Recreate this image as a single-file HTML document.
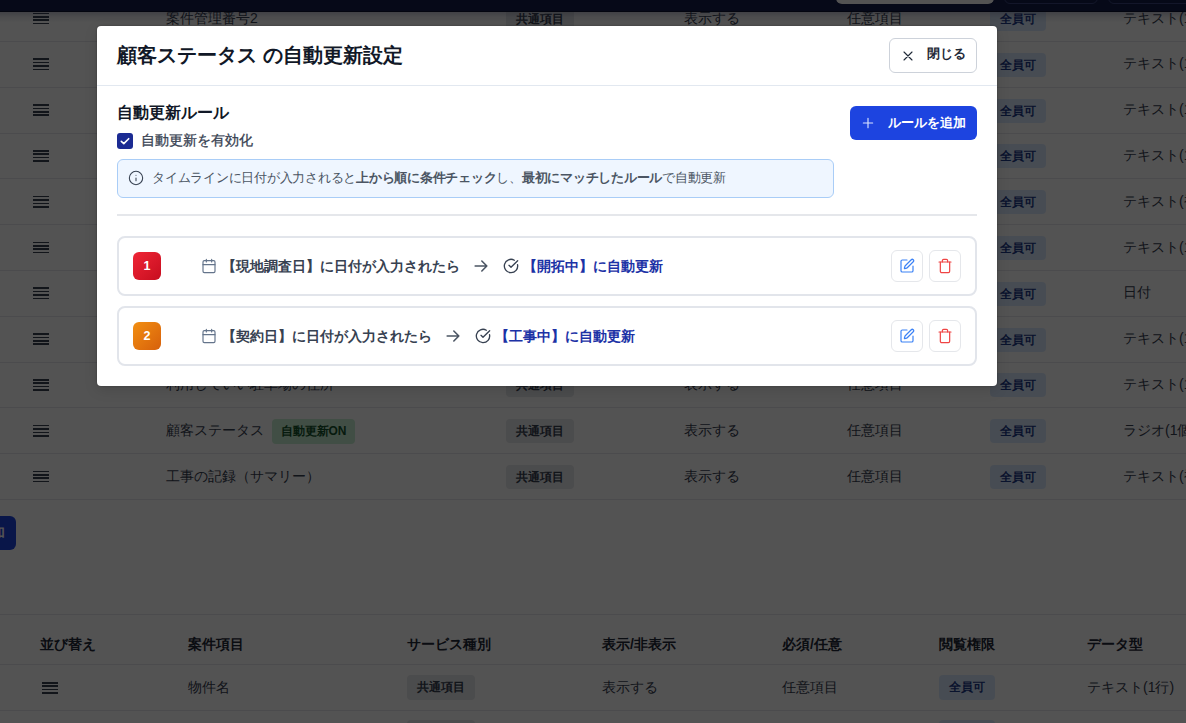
<!DOCTYPE html>
<html lang="ja"><head><meta charset="utf-8">
<style>
*{box-sizing:border-box;margin:0;padding:0}
html,body{width:1186px;height:723px;overflow:hidden;background:#fff;font-family:"Liberation Sans",sans-serif;color:#111827}
.abs{position:absolute}
#page{position:absolute;left:0;top:0;width:1186px;height:723px;background:#fff;overflow:hidden}
.nav{position:absolute;left:0;top:0;width:1186px;height:12px;background:#131c4a;z-index:3;border-bottom:1px solid #0a1030;overflow:hidden}
.navsh{position:absolute;left:0;top:12px;width:1186px;height:11px;z-index:3;background:linear-gradient(rgba(40,45,90,.26),rgba(40,45,90,.09) 50%,rgba(40,45,90,0))}
.row{position:absolute;left:0;width:1186px;border-bottom:1px solid #e5e7eb}
.ham{position:absolute;width:16px;height:12px}
.ham i{position:absolute;left:0;width:16px;height:1.7px;background:#374151}
.cell{position:absolute;font-size:14px;line-height:20px;color:#374151;white-space:nowrap}
.th{font-weight:700;color:#1f2937}
.chip{position:absolute;height:25px;border-radius:4px;font-size:12px;font-weight:700;line-height:25px;text-align:center;white-space:nowrap}
.chip.g{background:#e6e8eb;color:#374151}
.chip.b{background:#dbeafe;color:#1e3a8a}
.chip.gr{background:#c9f0d3;color:#14532d}
#ov{position:absolute;left:0;top:0;width:1186px;height:723px;background:rgba(0,0,0,.675);z-index:10}
#modal{position:absolute;left:97px;top:26px;width:900px;height:360px;background:#fff;border-radius:4px;box-shadow:0 0 2px rgba(0,0,0,.3),0 4px 14px rgba(0,0,0,.12)}
#m{position:absolute;left:0;top:0;width:1186px;height:723px;z-index:11}
#m .abs{z-index:12}
.mt{font-size:20px;font-weight:700;line-height:30px;color:#111827;white-space:nowrap}
.closebtn{width:88px;height:35px;border:1px solid #cdd2da;border-radius:6px;background:#fff}
.cb{width:16px;height:16px;border-radius:3px;background:#1b2b93}
.cb svg{position:absolute;left:0;top:0}
.info{background:#eff6ff;border:1px solid #a9cdf7;border-radius:6px}
.info b{color:#374151}
.addbtn{width:127px;height:34px;border-radius:6px;background:#1d44e0}
.card{border:2px solid #e2e5eb;border-radius:8px;background:#fff}
.badge{width:28px;height:28px;border-radius:6px;color:#fff;font-size:12.5px;font-weight:700;line-height:28px;text-align:center}
.rtxt{font-size:14px;font-weight:700;line-height:20px;color:#374151;white-space:nowrap}
.rtxt.blue{color:#1c32a6}
.ibtn{width:32px;height:32px;border:1px solid #e5e7eb;border-radius:6px;background:#fff}
</style></head><body>
<div id="page">
<div class="nav">
<div class="abs" style="left:836px;top:-30px;width:158px;height:34px;border-radius:6px;background:#fff"></div>
<div class="abs" style="left:1004px;top:-30px;width:94px;height:34px;border-radius:6px;border:1px solid #3a4680"></div>
<div class="abs" style="left:1108px;top:-30px;width:120px;height:34px;border-radius:6px;border:1px solid #3a4680"></div>
</div>
<div class="navsh"></div>
<div class="row" style="top:-3.8px;height:45.8px"></div>
<div class="ham" style="left:33px;top:12.6px"><i style="top:0"></i><i style="top:3.4px"></i><i style="top:6.8px"></i><i style="top:10.2px"></i></div>
<div class="cell" style="left:166px;top:7.6px">案件管理番号2</div>
<div class="chip g" style="left:506px;top:6.9px;width:68px;height:24px;line-height:24px">共通項目</div>
<div class="cell" style="left:684px;top:7.6px">表示する</div>
<div class="cell" style="left:847px;top:7.6px">任意項目</div>
<div class="chip b" style="left:990px;top:6.9px;width:56px;height:24px;line-height:24px">全員可</div>
<div class="cell" style="left:1123px;top:7.6px">テキスト(1行)</div>
<div class="row" style="top:42.0px;height:45.8px"></div>
<div class="ham" style="left:33px;top:58.4px"><i style="top:0"></i><i style="top:3.4px"></i><i style="top:6.8px"></i><i style="top:10.2px"></i></div>
<div class="cell" style="left:166px;top:53.4px">案件管理番号3</div>
<div class="chip g" style="left:506px;top:52.7px;width:68px;height:24px;line-height:24px">共通項目</div>
<div class="cell" style="left:684px;top:53.4px">表示する</div>
<div class="cell" style="left:847px;top:53.4px">任意項目</div>
<div class="chip b" style="left:990px;top:52.7px;width:56px;height:24px;line-height:24px">全員可</div>
<div class="cell" style="left:1123px;top:53.4px">テキスト(1行)</div>
<div class="row" style="top:87.8px;height:45.8px"></div>
<div class="ham" style="left:33px;top:104.2px"><i style="top:0"></i><i style="top:3.4px"></i><i style="top:6.8px"></i><i style="top:10.2px"></i></div>
<div class="cell" style="left:166px;top:99.2px">案件管理番号4</div>
<div class="chip g" style="left:506px;top:98.5px;width:68px;height:24px;line-height:24px">共通項目</div>
<div class="cell" style="left:684px;top:99.2px">表示する</div>
<div class="cell" style="left:847px;top:99.2px">任意項目</div>
<div class="chip b" style="left:990px;top:98.5px;width:56px;height:24px;line-height:24px">全員可</div>
<div class="cell" style="left:1123px;top:99.2px">テキスト(1行)</div>
<div class="row" style="top:133.6px;height:45.8px"></div>
<div class="ham" style="left:33px;top:150.0px"><i style="top:0"></i><i style="top:3.4px"></i><i style="top:6.8px"></i><i style="top:10.2px"></i></div>
<div class="cell" style="left:166px;top:145.0px">案件管理番号5</div>
<div class="chip g" style="left:506px;top:144.3px;width:68px;height:24px;line-height:24px">共通項目</div>
<div class="cell" style="left:684px;top:145.0px">表示する</div>
<div class="cell" style="left:847px;top:145.0px">任意項目</div>
<div class="chip b" style="left:990px;top:144.3px;width:56px;height:24px;line-height:24px">全員可</div>
<div class="cell" style="left:1123px;top:145.0px">テキスト(1行)</div>
<div class="row" style="top:179.4px;height:45.8px"></div>
<div class="ham" style="left:33px;top:195.8px"><i style="top:0"></i><i style="top:3.4px"></i><i style="top:6.8px"></i><i style="top:10.2px"></i></div>
<div class="cell" style="left:166px;top:190.8px">案件メモ</div>
<div class="chip g" style="left:506px;top:190.1px;width:68px;height:24px;line-height:24px">共通項目</div>
<div class="cell" style="left:684px;top:190.8px">表示する</div>
<div class="cell" style="left:847px;top:190.8px">任意項目</div>
<div class="chip b" style="left:990px;top:190.1px;width:56px;height:24px;line-height:24px">全員可</div>
<div class="cell" style="left:1123px;top:190.8px">テキスト(複数行)</div>
<div class="row" style="top:225.2px;height:45.8px"></div>
<div class="ham" style="left:33px;top:241.6px"><i style="top:0"></i><i style="top:3.4px"></i><i style="top:6.8px"></i><i style="top:10.2px"></i></div>
<div class="cell" style="left:166px;top:236.6px">案件名称</div>
<div class="chip g" style="left:506px;top:235.9px;width:68px;height:24px;line-height:24px">共通項目</div>
<div class="cell" style="left:684px;top:236.6px">表示する</div>
<div class="cell" style="left:847px;top:236.6px">任意項目</div>
<div class="chip b" style="left:990px;top:235.9px;width:56px;height:24px;line-height:24px">全員可</div>
<div class="cell" style="left:1123px;top:236.6px">テキスト(1行)</div>
<div class="row" style="top:271.0px;height:45.8px"></div>
<div class="ham" style="left:33px;top:287.4px"><i style="top:0"></i><i style="top:3.4px"></i><i style="top:6.8px"></i><i style="top:10.2px"></i></div>
<div class="cell" style="left:166px;top:282.4px">現地調査日</div>
<div class="chip g" style="left:506px;top:281.7px;width:68px;height:24px;line-height:24px">共通項目</div>
<div class="cell" style="left:684px;top:282.4px">表示する</div>
<div class="cell" style="left:847px;top:282.4px">任意項目</div>
<div class="chip b" style="left:990px;top:281.7px;width:56px;height:24px;line-height:24px">全員可</div>
<div class="cell" style="left:1123px;top:282.4px">日付</div>
<div class="row" style="top:316.8px;height:45.8px"></div>
<div class="ham" style="left:33px;top:333.2px"><i style="top:0"></i><i style="top:3.4px"></i><i style="top:6.8px"></i><i style="top:10.2px"></i></div>
<div class="cell" style="left:166px;top:328.2px">駐車場の住所</div>
<div class="chip g" style="left:506px;top:327.5px;width:68px;height:24px;line-height:24px">共通項目</div>
<div class="cell" style="left:684px;top:328.2px">表示する</div>
<div class="cell" style="left:847px;top:328.2px">任意項目</div>
<div class="chip b" style="left:990px;top:327.5px;width:56px;height:24px;line-height:24px">全員可</div>
<div class="cell" style="left:1123px;top:328.2px">テキスト(1行)</div>
<div class="row" style="top:362.6px;height:45.8px"></div>
<div class="ham" style="left:33px;top:379.0px"><i style="top:0"></i><i style="top:3.4px"></i><i style="top:6.8px"></i><i style="top:10.2px"></i></div>
<div class="cell" style="left:166px;top:374.0px">利用していい駐車場の住所</div>
<div class="chip g" style="left:506px;top:373.3px;width:68px;height:24px;line-height:24px">共通項目</div>
<div class="cell" style="left:684px;top:374.0px">表示する</div>
<div class="cell" style="left:847px;top:374.0px">任意項目</div>
<div class="chip b" style="left:990px;top:373.3px;width:56px;height:24px;line-height:24px">全員可</div>
<div class="cell" style="left:1123px;top:374.0px">テキスト(1行)</div>
<div class="row" style="top:408.4px;height:45.8px"></div>
<div class="ham" style="left:33px;top:424.8px"><i style="top:0"></i><i style="top:3.4px"></i><i style="top:6.8px"></i><i style="top:10.2px"></i></div>
<div class="cell" style="left:166px;top:419.8px">顧客ステータス</div><div class="chip gr" style="left:272px;top:419.1px;width:83px;height:25px;line-height:25px">自動更新ON</div>
<div class="chip g" style="left:506px;top:419.1px;width:68px;height:24px;line-height:24px">共通項目</div>
<div class="cell" style="left:684px;top:419.8px">表示する</div>
<div class="cell" style="left:847px;top:419.8px">任意項目</div>
<div class="chip b" style="left:990px;top:419.1px;width:56px;height:24px;line-height:24px">全員可</div>
<div class="cell" style="left:1123px;top:419.8px">ラジオ(1個選択)</div>
<div class="row" style="top:454.2px;height:45.8px"></div>
<div class="ham" style="left:33px;top:470.6px"><i style="top:0"></i><i style="top:3.4px"></i><i style="top:6.8px"></i><i style="top:10.2px"></i></div>
<div class="cell" style="left:166px;top:465.6px">工事の記録（サマリー）</div>
<div class="chip g" style="left:506px;top:464.9px;width:68px;height:24px;line-height:24px">共通項目</div>
<div class="cell" style="left:684px;top:465.6px">表示する</div>
<div class="cell" style="left:847px;top:465.6px">任意項目</div>
<div class="chip b" style="left:990px;top:464.9px;width:56px;height:24px;line-height:24px">全員可</div>
<div class="cell" style="left:1123px;top:465.6px">テキスト(複数行)</div>
<div class="abs" style="left:-100px;top:516px;width:116px;height:34px;border-radius:6px;background:#1d44e0;overflow:hidden"><span style="position:absolute;right:11.5px;top:6px;color:#fff;font-size:14px;font-weight:700;line-height:20px;white-space:nowrap">ルールを追加</span></div>

<div class="row" style="top:614px;height:51px;border-top:1px solid #e5e7eb;border-bottom:1px solid #e5e7eb"></div>
<div class="cell th" style="left:40px;top:634px">並び替え</div>
<div class="cell th" style="left:188px;top:634px">案件項目</div>
<div class="cell th" style="left:407px;top:634px">サービス種別</div>
<div class="cell th" style="left:602px;top:634px">表示/非表示</div>
<div class="cell th" style="left:782px;top:634px">必須/任意</div>
<div class="cell th" style="left:939px;top:634px">閲覧権限</div>
<div class="cell th" style="left:1087px;top:634px">データ型</div>
<div class="row" style="top:665px;height:46px"></div>
<div class="ham" style="left:41.5px;top:682px"><i style="top:0"></i><i style="top:3.4px"></i><i style="top:6.8px"></i><i style="top:10.2px"></i></div>
<div class="cell" style="left:188px;top:677px">物件名</div>
<div class="chip g" style="left:407px;top:675px;width:68px;height:25px;line-height:25px">共通項目</div>
<div class="cell" style="left:602px;top:677px">表示する</div>
<div class="cell" style="left:782px;top:677px">任意項目</div>
<div class="chip b" style="left:939px;top:675px;width:56px;height:25px;line-height:25px">全員可</div>
<div class="cell" style="left:1087px;top:677px">テキスト(1行)</div>
<div class="chip g" style="left:407px;top:720px;width:68px;height:25px">共通項目</div>
<div class="chip b" style="left:939px;top:720px;width:56px;height:25px">全員可</div>

</div>
<div id="ov"></div>
<div id="m">
<div id="modal"></div>
<div class="abs mt" style="left:117px;top:40px">顧客ステータス の自動更新設定</div>
<div class="abs" style="left:97px;top:85px;width:900px;height:1px;background:#e2e8f0;z-index:12"></div>
<div class="abs closebtn" style="left:889px;top:38px"></div>
<svg class="abs" style="left:900px;top:48px" width="16" height="16" viewBox="0 0 24 24" fill="none" stroke="#1f2937" stroke-width="1.7" stroke-linecap="round"><path d="M18 6 6 18M6 6l12 12"/></svg>
<div class="abs" style="left:927px;top:44px;font-size:13px;font-weight:700;line-height:20px;color:#1f2937">閉じる</div>
<div class="abs" style="left:117px;top:101px;font-size:16px;font-weight:700;line-height:24px;color:#111827">自動更新ルール</div>
<div class="abs cb" style="left:117px;top:133px"><svg width="16" height="16" viewBox="0 0 16 16"><path d="M4.3 8.3l2.5 2.3 4.9-4.9" fill="none" stroke="#fff" stroke-width="1.6" stroke-linecap="round" stroke-linejoin="round"/></svg></div>
<div class="abs" style="left:141px;top:130px;font-size:14px;line-height:20px;color:#374151;-webkit-text-stroke:0.3px #374151">自動更新を有効化</div>
<div class="abs info" style="left:117px;top:159px;width:717px;height:39px"></div>
<svg class="abs" style="left:128px;top:170px" width="16" height="16" viewBox="0 0 24 24" fill="none" stroke="#374151" stroke-width="1.6" stroke-linecap="round"><circle cx="12" cy="12" r="10"/><path d="M12 16v-4M12 8h.01"/></svg>
<div class="abs" style="left:152px;top:168px;font-size:13px;line-height:20px;color:#4b5563;white-space:nowrap;letter-spacing:-0.25px">タイムラインに日付が入力されると<b>上から順に条件チェック</b>し、<b>最初にマッチしたルール</b>で自動更新</div>
<div class="abs addbtn" style="left:850px;top:106px"></div>
<svg class="abs" style="left:860px;top:115px" width="16" height="16" viewBox="0 0 24 24" fill="none" stroke="#dbe4ff" stroke-width="1.7" stroke-linecap="round"><path d="M5 12h14M12 5v14"/></svg>
<div class="abs" style="left:888px;top:113px;font-size:13px;font-weight:700;line-height:20px;color:#fff">ルールを追加</div>
<div class="abs" style="left:117px;top:214px;width:860px;height:2px;background:#e5e7eb;z-index:12"></div>
<div class="abs card" style="left:117px;top:236px;width:860px;height:60px"></div>
<div class="abs badge" style="left:133px;top:252px;background:linear-gradient(135deg,#ef2636,#c70d1f)">1</div>
<svg class="abs" style="left:201px;top:258px" width="16" height="16" viewBox="0 0 24 24" fill="none" stroke="#64748b" stroke-width="1.75" stroke-linecap="round" stroke-linejoin="round"><path d="M8 2v4M16 2v4"/><rect width="18" height="18" x="3" y="4" rx="2"/><path d="M3 10h18"/></svg>
<div class="abs rtxt" style="left:222px;top:256px">【現地調査日】に日付が入力されたら</div>
<svg class="abs" style="left:471px;top:256px" width="20" height="20" viewBox="0 0 24 24" fill="none" stroke="#4b5563" stroke-width="1.9" stroke-linecap="round" stroke-linejoin="round"><path d="M5 12h14M13 6l6 6-6 6"/></svg>
<div class="abs rtxt blue" style="left:523px;top:256px">【開拓中】に自動更新</div>
<div class="abs ibtn" style="left:891px;top:250px"></div>
<div class="abs ibtn" style="left:929px;top:250px"></div>
<svg class="abs" style="left:899px;top:258px" width="16" height="16" viewBox="0 0 24 24" fill="none" stroke="#3b82f6" stroke-width="1.8" stroke-linecap="round" stroke-linejoin="round"><path d="M12 3H5a2 2 0 0 0-2 2v14a2 2 0 0 0 2 2h14a2 2 0 0 0 2-2v-7"/><path d="M18.375 2.625a1 1 0 0 1 3 3l-9.013 9.014a2 2 0 0 1-.853.505l-2.873.84a.5.5 0 0 1-.62-.62l.84-2.873a2 2 0 0 1 .506-.852z"/></svg><svg class="abs" style="left:937px;top:258px" width="16" height="16" viewBox="0 0 24 24" fill="none" stroke="#ef4444" stroke-width="1.8" stroke-linecap="round" stroke-linejoin="round"><path d="M3 6h18"/><path d="M19 6v14c0 1-1 2-2 2H7c-1 0-2-1-2-2V6"/><path d="M8 6V4c0-1 1-2 2-2h4c1 0 2 1 2 2v2"/></svg><svg class="abs" style="left:503.3px;top:258.2px" width="16" height="16" viewBox="0 0 24 24" fill="none" stroke="#374151" stroke-width="2" stroke-linecap="round" stroke-linejoin="round"><path d="M21.801 10A10 10 0 1 1 17 3.335"/><path d="m9 11 3 3L22 4"/></svg>
<div class="abs card" style="left:117px;top:306px;width:860px;height:60px"></div>
<div class="abs badge" style="left:133px;top:322px;background:linear-gradient(135deg,#f28f12,#d6600b)">2</div>
<svg class="abs" style="left:201px;top:328px" width="16" height="16" viewBox="0 0 24 24" fill="none" stroke="#64748b" stroke-width="1.75" stroke-linecap="round" stroke-linejoin="round"><path d="M8 2v4M16 2v4"/><rect width="18" height="18" x="3" y="4" rx="2"/><path d="M3 10h18"/></svg>
<div class="abs rtxt" style="left:222px;top:326px">【契約日】に日付が入力されたら</div>
<svg class="abs" style="left:443px;top:326px" width="20" height="20" viewBox="0 0 24 24" fill="none" stroke="#4b5563" stroke-width="1.9" stroke-linecap="round" stroke-linejoin="round"><path d="M5 12h14M13 6l6 6-6 6"/></svg>
<div class="abs rtxt blue" style="left:495px;top:326px">【工事中】に自動更新</div>
<div class="abs ibtn" style="left:891px;top:320px"></div>
<div class="abs ibtn" style="left:929px;top:320px"></div>
<svg class="abs" style="left:899px;top:328px" width="16" height="16" viewBox="0 0 24 24" fill="none" stroke="#3b82f6" stroke-width="1.8" stroke-linecap="round" stroke-linejoin="round"><path d="M12 3H5a2 2 0 0 0-2 2v14a2 2 0 0 0 2 2h14a2 2 0 0 0 2-2v-7"/><path d="M18.375 2.625a1 1 0 0 1 3 3l-9.013 9.014a2 2 0 0 1-.853.505l-2.873.84a.5.5 0 0 1-.62-.62l.84-2.873a2 2 0 0 1 .506-.852z"/></svg><svg class="abs" style="left:937px;top:328px" width="16" height="16" viewBox="0 0 24 24" fill="none" stroke="#ef4444" stroke-width="1.8" stroke-linecap="round" stroke-linejoin="round"><path d="M3 6h18"/><path d="M19 6v14c0 1-1 2-2 2H7c-1 0-2-1-2-2V6"/><path d="M8 6V4c0-1 1-2 2-2h4c1 0 2 1 2 2v2"/></svg><svg class="abs" style="left:475.3px;top:328.2px" width="16" height="16" viewBox="0 0 24 24" fill="none" stroke="#374151" stroke-width="2" stroke-linecap="round" stroke-linejoin="round"><path d="M21.801 10A10 10 0 1 1 17 3.335"/><path d="m9 11 3 3L22 4"/></svg>

</div>
</body></html>
